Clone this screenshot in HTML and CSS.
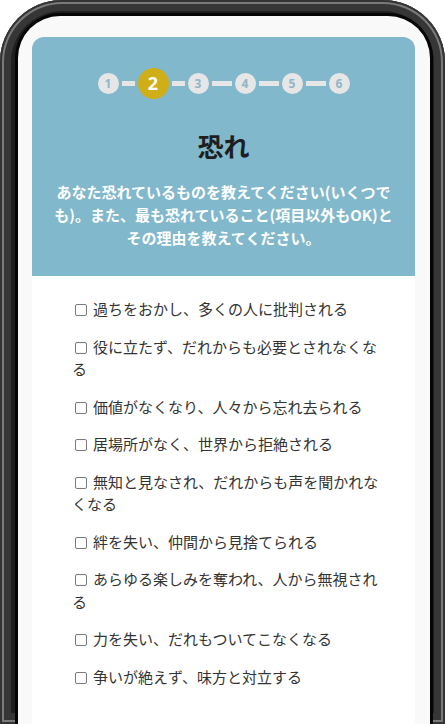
FILE: index.html
```html
<!DOCTYPE html>
<html lang="ja">
<head>
<meta charset="utf-8">
<title>恐れ</title>
<link rel="stylesheet" href="styles.css">
</head>
<body>
<div class="phone">
  <div class="screen">
    <div class="card">
      <header class="head">
        <div class="stepper">
          <span class="step">1</span>
          <span class="bar short"></span>
          <span class="step active">2</span>
          <span class="bar short"></span>
          <span class="step">3</span>
          <span class="bar"></span>
          <span class="step">4</span>
          <span class="bar"></span>
          <span class="step">5</span>
          <span class="bar"></span>
          <span class="step">6</span>
        </div>
        <h1 class="title">恐れ</h1>
        <p class="desc">あなた恐れているものを教えてください(いくつでも)。また、最も恐れていること(項目以外もOK)とその理由を教えてください。</p>
      </header>
      <ul class="list">
        <li class="item"><label><input type="checkbox" class="cb">過ちをおかし、多くの人に批判される</label></li>
        <li class="item"><label><input type="checkbox" class="cb">役に立たず、だれからも必要とされなくなる</label></li>
        <li class="item"><label><input type="checkbox" class="cb">価値がなくなり、人々から忘れ去られる</label></li>
        <li class="item"><label><input type="checkbox" class="cb">居場所がなく、世界から拒絶される</label></li>
        <li class="item"><label><input type="checkbox" class="cb">無知と見なされ、だれからも声を聞かれなくなる</label></li>
        <li class="item"><label><input type="checkbox" class="cb">絆を失い、仲間から見捨てられる</label></li>
        <li class="item"><label><input type="checkbox" class="cb">あらゆる楽しみを奪われ、人から無視される</label></li>
        <li class="item"><label><input type="checkbox" class="cb">力を失い、だれもついてこなくなる</label></li>
        <li class="item"><label><input type="checkbox" class="cb">争いが絶えず、味方と対立する</label></li>
      </ul>
    </div>
  </div>
</div>
</body>
</html>
```

FILE: styles.css
```css
html, body {
  margin: 0;
  padding: 0;
}
body {
  width: 445px;
  height: 724px;
  overflow: hidden;
  background: #ffffff;
  font-family: "Noto Sans CJK JP", "Noto Sans", sans-serif;
}
.phone {
  width: 445px;
  height: 724px;
  box-sizing: border-box;
  padding: 16px 15px 0 18px;
  border-radius: 62px 62px 0 0;
  background: #1f1f1f;
  box-shadow: inset 0 0 0 2px #333333, inset 0 0 0 4px #7a7a7a, inset 0 0 0 11px #363636;
  overflow: hidden;
}
.screen {
  height: 100%;
  box-sizing: border-box;
  padding: 21px 15px 0 14px;
  background: #f9f9f9;
  border-radius: 42px 42px 0 0;
  box-shadow: 0 0 0 3px #050505;
}
.card {
  height: 100%;
  background: #ffffff;
  border-radius: 12px 12px 0 0;
  overflow: hidden;
}
.head {
  background: #81b8cc;
  padding: 31px 20px 27px;
  text-align: center;
}
.stepper {
  display: flex;
  align-items: center;
  justify-content: center;
  gap: 3px;
  height: 31px;
}
.step {
  width: 21px;
  height: 21px;
  border-radius: 50%;
  background: #e6e6e6;
  color: #8fb6c7;
  font-family: "Noto Sans", sans-serif;
  font-weight: 700;
  font-size: 12px;
  line-height: 21px;
  text-align: center;
}
.step.active {
  width: 31px;
  height: 31px;
  line-height: 31px;
  background: #cfae18;
  color: #ffffff;
  font-size: 18px;
}
.bar {
  width: 20px;
  height: 5px;
  background: #e6e6e6;
}
.bar.short {
  width: 13px;
}
.title {
  margin: 29px 0 16px;
  font-size: 26px;
  line-height: 36px;
  font-weight: 700;
  color: #1e1e1e;
}
.desc {
  margin: 0;
  font-size: 15px;
  line-height: 23px;
  font-weight: 700;
  color: #ffffff;
}
.list {
  list-style: none;
  margin: 0;
  padding: 22px 30px 0 40px;
}
.item {
  font-size: 15px;
  line-height: 22.5px;
  color: #333333;
  margin-bottom: 15px;
}
.cb {
  -webkit-appearance: none;
  appearance: none;
  width: 12px;
  height: 12px;
  box-sizing: border-box;
  border: 1px solid #7a7a7a;
  border-radius: 2px;
  background: #ffffff;
  margin: 0 6px 0 3px;
  vertical-align: -1px;
}
```
